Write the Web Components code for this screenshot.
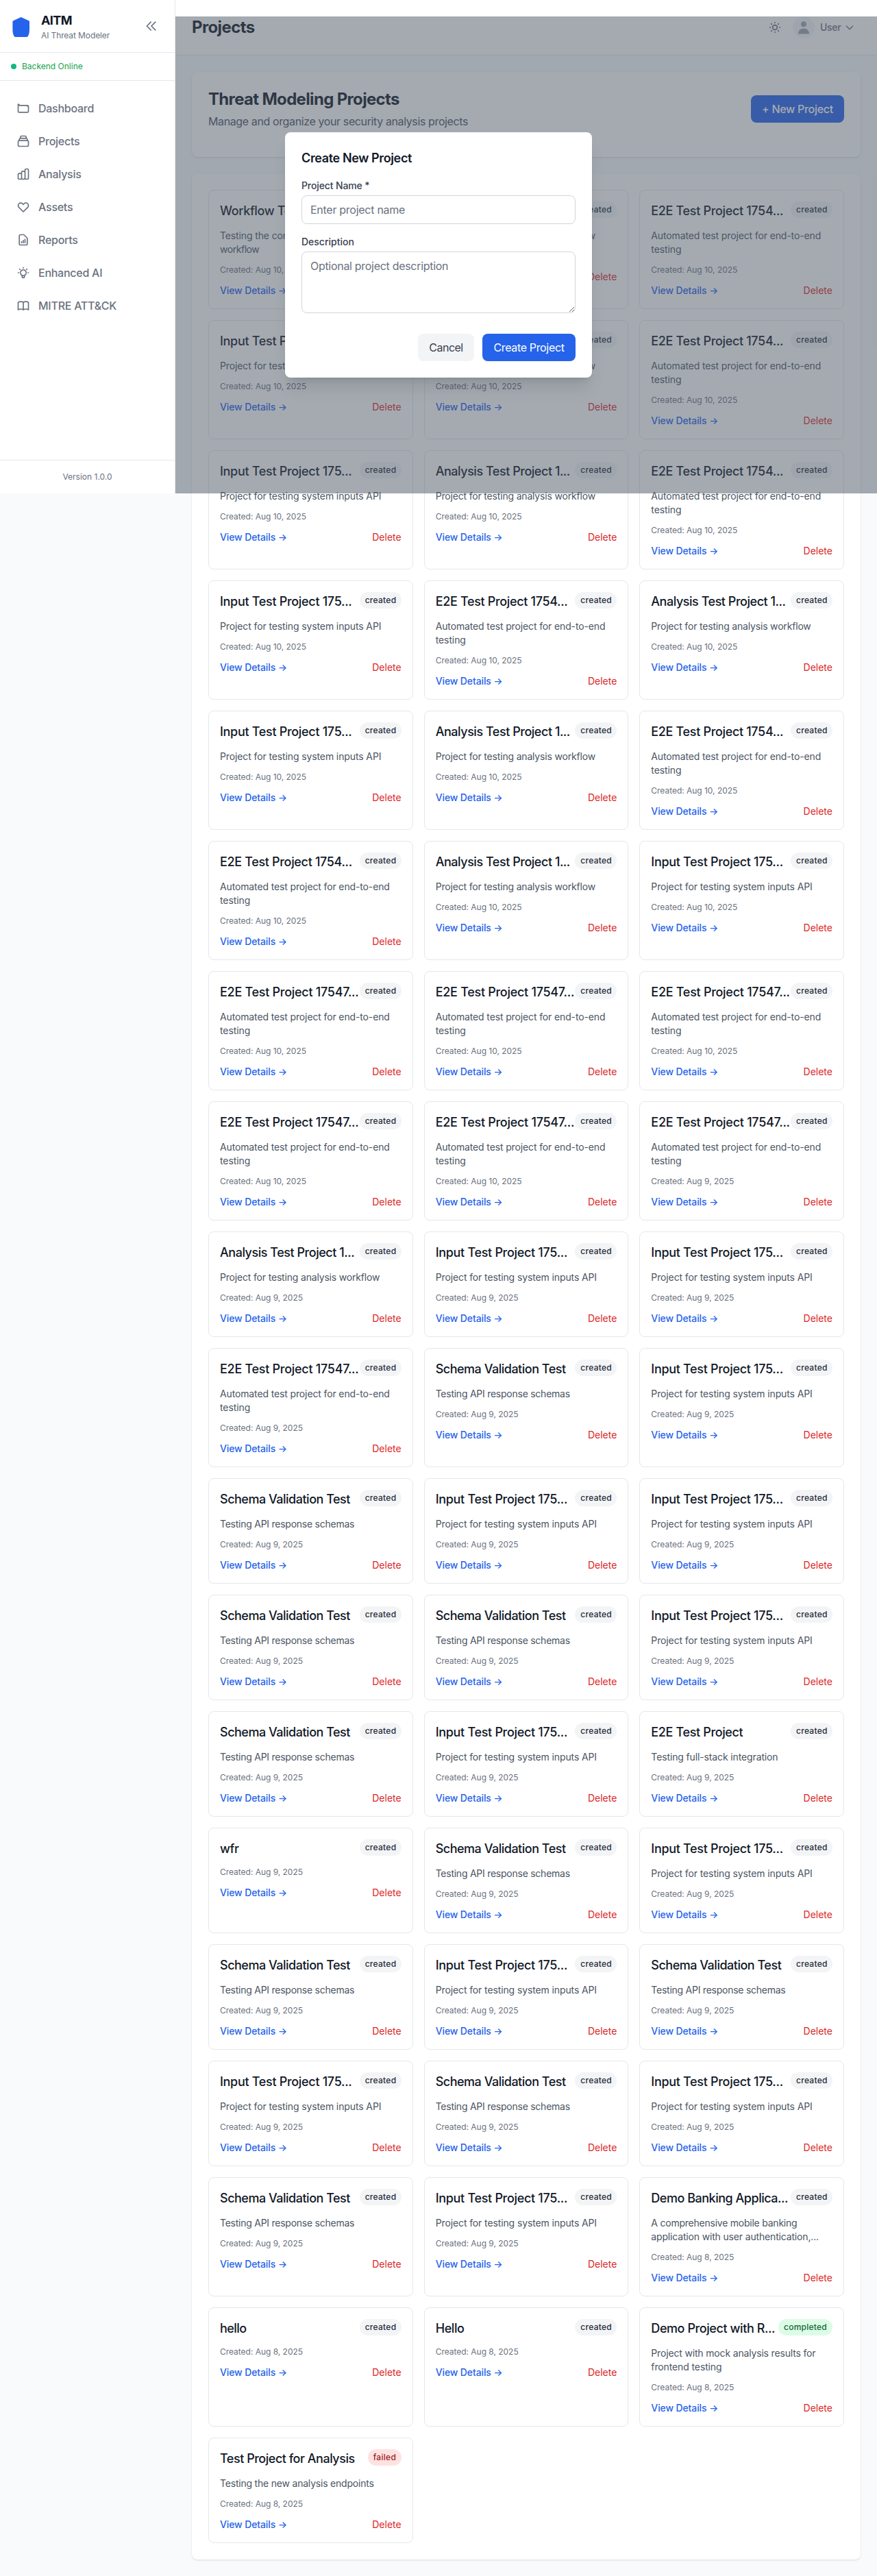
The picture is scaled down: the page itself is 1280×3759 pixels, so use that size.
<!DOCTYPE html>
<html lang="en">
<head>
<meta charset="utf-8">
<title>AITM - Projects</title>
<style>
body{margin:0;background:#f8fafc;font-family:Inter,"Liberation Sans",sans-serif;font-size:16px;line-height:24px;color:#111827}
</style>
</head>
<body>
<aitm-app></aitm-app>
<script>
const ICONS = {
  dashboard: 'M3 7v10a2 2 0 002 2h14a2 2 0 002-2V9a2 2 0 00-2-2H5a2 2 0 00-2-2zM18.3 7.6l1.9.9',
  projects: 'M19 11H5m14 0a2 2 0 012 2v6a2 2 0 01-2 2H5a2 2 0 01-2-2v-6a2 2 0 012-2m14 0V9a2 2 0 00-2-2M5 11V9a2 2 0 012-2m0 0V5a2 2 0 012-2h6a2 2 0 012 2v2M7 7h10',
  analysis: 'M9 19v-6a2 2 0 00-2-2H5a2 2 0 00-2 2v6a2 2 0 002 2h2a2 2 0 002-2zm0 0V9a2 2 0 012-2h2a2 2 0 012 2v10m-6 0a2 2 0 002 2h2a2 2 0 002-2m0 0V5a2 2 0 012-2h2a2 2 0 012 2v14a2 2 0 01-2 2h-2a2 2 0 01-2-2z',
  assets: 'M4.318 6.318a4.5 4.5 0 000 6.364L12 20.364l7.682-7.682a4.5 4.5 0 00-6.364-6.364L12 7.636l-1.318-1.318a4.5 4.5 0 00-6.364 0z',
  reports: 'M9 17v-2m3 2v-4m3 4v-6m2 10H7a2 2 0 01-2-2V5a2 2 0 012-2h5.586a1 1 0 01.707.293l5.414 5.414a1 1 0 01.293.707V19a2 2 0 01-2 2z',
  bulb: 'M9.663 17h4.673M12 3v1m6.364 1.636l-.707.707M21 12h-1M4 12H3m3.343-5.657l-.707-.707m2.828 9.9a5 5 0 117.072 0l-.548.547A3.374 3.374 0 0014 18.469V19a2 2 0 11-4 0v-.531c0-.895-.356-1.754-.988-2.386l-.548-.547z',
  book: 'M12 6.253v13m0-13C10.832 5.477 9.246 5 7.5 5S4.168 5.477 3 6.253v13C4.168 18.477 5.754 18 7.5 18s3.332.477 4.5 1.253m0-13C13.168 5.477 14.754 5 16.5 5c1.747 0 3.332.477 4.5 1.253v13C19.832 18.477 18.247 18 16.5 18c-1.746 0-3.332.477-4.5 1.253',
  collapse: 'M11 19l-7-7 7-7m8 14l-7-7 7-7',
  sun: 'M12 3v1m0 16v1m9-9h-1M4 12H3m15.364 6.364l-.707-.707M6.343 6.343l-.707-.707m12.728 0l-.707.707M6.343 17.657l-.707.707M16 12a4 4 0 11-8 0 4 4 0 018 0z',
  down: 'M19 9l-7 7-7-7'
};
const icon = (name, size = 20) => `<svg width="${size}" height="${size}" viewBox="0 0 24 24" fill="none" stroke="currentColor" stroke-width="2" stroke-linecap="round" stroke-linejoin="round"><path d="${ICONS[name]}"/></svg>`;

const pen = document.createElement('canvas').getContext('2d');

/* Shared base: fills the shadow root and tracks [data-w] texts to a given ink width. */
class Base extends HTMLElement {
  connectedCallback() {
    if (this.shadowRoot) return;
    const root = this.attachShadow({ mode: 'open' });
    root.innerHTML = `<style>*{box-sizing:border-box}h1,h2,h3,p{margin:0}svg{display:block;flex:none}button{font:inherit;letter-spacing:inherit;border:0;padding:0;margin:0;background:none;color:inherit}${this.styles()}</style>${this.markup()}`;
    root.querySelectorAll('[data-w]').forEach(el => {
      const cs = getComputedStyle(el), text = el.textContent;
      pen.font = `${cs.fontWeight} ${cs.fontSize} Inter`;
      const m = pen.measureText(text);
      const ink = m.actualBoundingBoxLeft + m.actualBoundingBoxRight;
      el.style.letterSpacing = ((el.dataset.w - ink) / (text.length - 1)).toFixed(3) + 'px';
    });
  }
}

customElements.define('nav-item', class extends Base {
  styles() { return `:host{display:flex;align-items:center;height:48px;padding-left:24px;gap:12px;color:#6b7280;font-weight:500;letter-spacing:-.26px}`; }
  markup() { return `${icon(this.getAttribute('icon'))}<slot></slot>`; }
});

customElements.define('app-sidebar', class extends Base {
  styles() { return `
    :host{display:flex;flex-direction:column;width:256px;height:720px;background:#fff;border-right:1px solid #e5e7eb;box-sizing:border-box;flex:none}
    .brand{display:flex;align-items:center;padding:16px;gap:12px;border-bottom:1px solid #e5e7eb}
    .brand .t{flex:1}
    h1{font-size:18px;line-height:28px;font-weight:700}
    .sub{font-size:12px;line-height:16px;color:#6b7280}
    .toggle{padding:8px;color:#6b7280}
    .status{display:flex;align-items:center;gap:8px;padding:12px 16px;border-bottom:1px solid #e5e7eb;font-size:12px;line-height:16px;color:#16a34a}
    .dot{width:8px;height:8px;border-radius:50%;background:#10b981}
    nav{flex:1;padding-top:16px}
    .foot{border-top:1px solid #e5e7eb;padding:16px;font-size:12px;line-height:16px;height:49px;color:#6b7280;text-align:center}`; }
  markup() { return `
    <div class="brand"><svg width="32" height="32" viewBox="0 0 32 32"><path fill="#2563eb" d="M14.7 3L25.6 7.9Q27 8.4 27 9.8V21C27 26 26 30 23.6 32H5.8C3.4 30 2.4 26 2.4 21V9.8Q2.4 8.4 3.8 7.9Z"/></svg>
      <div class="t"><h1><span data-w="44.7">AITM</span></h1><div class="sub"><span data-w="100.7">AI Threat Modeler</span></div></div>
      <button class="toggle">${icon('collapse')}</button></div>
    <div class="status"><span class="dot"></span><span>Backend Online</span></div>
    <nav>
      <nav-item icon="dashboard">Dashboard</nav-item>
      <nav-item icon="projects">Projects</nav-item>
      <nav-item icon="analysis">Analysis</nav-item>
      <nav-item icon="assets">Assets</nav-item>
      <nav-item icon="reports">Reports</nav-item>
      <nav-item icon="bulb">Enhanced AI</nav-item>
      <nav-item icon="book">MITRE ATT&amp;CK</nav-item>
    </nav>
    <div class="foot">Version 1.0.0</div>`; }
});

customElements.define('top-bar', class extends Base {
  styles() { return `
    :host{display:flex;align-items:center;justify-content:space-between;box-sizing:border-box;height:81px;padding:0 32px 0 24px;background:#fff;border-bottom:1px solid #e5e7eb}
    h1{font-size:24px;line-height:32px;font-weight:700}
    .right{display:flex;align-items:center;color:#6b7280}
    .avatar{width:32px;height:32px;border-radius:50%;background:#f3f4f6;margin:0 8px 0 16px;display:flex;align-items:center;justify-content:center;color:#9ca3af}
    .name{width:35px;font-size:14px;line-height:20px;font-weight:500}`; }
  markup() { return `<h1><span data-w="90.7">Projects</span></h1>
    <div class="right">${icon('sun')}
      <span class="avatar"><svg width="20" height="20" viewBox="0 0 20 20" fill="currentColor"><circle cx="10" cy="5.2" r="4"/><path d="M1.9 19.6C1.9 14.2 5.5 11.4 10 11.4S18.1 14.2 18.1 19.6Z"/></svg></span>
      <span class="name"><span data-w="30.3">User</span></span>${icon('down', 16)}</div>`; }
});

customElements.define('page-intro', class extends Base {
  styles() { return `
    :host{display:flex;justify-content:space-between;align-items:center;box-sizing:border-box;height:124px;padding:24px 24px 40px;background:#fff;border-radius:8px;box-shadow:0 1px 3px rgba(0,0,0,.1),0 1px 2px -1px rgba(0,0,0,.1)}
    h2{font-size:24px;line-height:32px;font-weight:700}
    p{margin-top:4px;color:#4b5563}
    button{width:136px;height:40px;border-radius:8px;background:#2563eb;color:#fff;font-weight:500}`; }
  markup() { return `<div><h2><span data-w="279">Threat Modeling Projects</span></h2><p><span data-w="378">Manage and organize your security analysis projects</span></p></div>
    <button><span data-w="103.7">+ New Project</span></button>`; }
});

customElements.define('project-card', class extends Base {
  styles() { return `
    :host{display:block;border:1px solid #e5e7eb;border-radius:8px;padding:16px;box-sizing:border-box;min-width:0}
    .top{display:flex;justify-content:space-between;align-items:flex-start;margin-bottom:12px}
    h3{font-size:18px;line-height:28px;font-weight:500;white-space:nowrap;width:0;flex:1;letter-spacing:-.36px}
    .badge{flex:none;padding:4px 8px;border-radius:12px;font-size:12px;line-height:16px;font-weight:500;text-align:center;width:61px;background:#f3f4f6;color:#1f2937}
    .completed{background:#dcfce7;color:#166534;width:79px}
    .failed{background:#fee2e2;color:#991b1b;width:49px}
    .desc{font-size:14px;line-height:20px;color:#4b5563;margin-bottom:12px;letter-spacing:-.13px;white-space:nowrap}
    .desc span{display:block}
    .date{font-size:12px;line-height:16px;color:#6b7280;margin-bottom:12px;letter-spacing:-.026px}
    .row{display:flex;justify-content:space-between;font-size:14px;line-height:20px}
    .view{color:#2563eb;font-weight:500}.del{color:#dc2626}`; }
  markup() {
    const { title, tw, lines, date, status } = this.data;
    const w = n => n ? ` data-w="${n}"` : '';
    const bw = { created: 45, completed: 62.3, failed: 32.8 }[status];
    return `<div class="top"><h3><span${w(tw)}>${title}</span></h3><span class="badge ${status}"><span data-w="${bw}">${status}</span></span></div>
      ${lines.length ? `<p class="desc">${lines.map(([t, n]) => `<span${w(n)}>${t}</span>`).join('')}</p>` : ''}
      <div class="date">Created: Aug ${date}, 2025</div>
      <div class="row"><span class="view"><span data-w="96.7">View Details →</span></span><span class="del">Delete</span></div>`;
  }
});

const KINDS = {
  I: ['Input Test Project 175...', 191.3, [['Project for testing system inputs API', 233.7]]],
  A: ['Analysis Test Project 1...', 196.2, [['Project for testing analysis workflow', 232]]],
  E: ['E2E Test Project 1754...', 191.7, [['Automated test project for end-to-end', 247.3], ['testing', 43.7]]],
  F: ['E2E Test Project 17547...', 201.3, [['Automated test project for end-to-end', 247.3], ['testing', 43.7]]],
  S: ['Schema Validation Test', 190.3, [['Testing API response schemas', 196]]],
  W: ['Workflow Test Project...', 0, [['Testing the complete analysis', 0], ['workflow', 57.3]]],
  P: ['E2E Test Project', 0, [['Testing full-stack integration', 0]]],
  w: ['wfr', 0, []],
  h: ['hello', 38.3, []],
  H: ['Hello', 41.4, []],
  B: ['Demo Banking Applica...', 198.7, [['A comprehensive mobile banking', 212.7], ['application with user authentication,...', 243.7]]],
  R: ['Demo Project with R...', 179.7, [['Project with mock analysis results for', 239], ['frontend testing', 102.7]]],
  T: ['Test Project for Analysis', 196.5, [['Testing the new analysis endpoints', 224.5]]]
};
const ORDER = 'WAE IAE IAE IEA IAE EAI FFF FFF AII FSI SII SSI SIP wSI SIS ISI SIB hHR T'.replace(/ /g, '');

customElements.define('project-grid', class extends Base {
  styles() { return `
    :host{display:grid;grid-template-columns:repeat(3,minmax(0,1fr));gap:16px;padding:24px;background:#fff;border-radius:8px;box-shadow:0 1px 3px rgba(0,0,0,.1),0 1px 2px -1px rgba(0,0,0,.1)}`; }
  markup() { return ''; }
  connectedCallback() {
    super.connectedCallback();
    [...ORDER].forEach((k, i) => {
      const [title, tw, lines] = KINDS[k];
      const card = document.createElement('project-card');
      card.data = { title, tw, lines, date: i < 23 ? 10 : i < 50 ? 9 : 8, status: k === 'R' ? 'completed' : k === 'T' ? 'failed' : 'created' };
      this.shadowRoot.append(card);
    });
  }
});

customElements.define('create-dialog', class extends Base {
  styles() { return `
    :host{display:flex;align-items:center;justify-content:center;position:absolute;left:256px;right:0;top:24px;height:696px;padding-right:256px;box-sizing:border-box;background:rgba(75,85,99,.5)}
    .box{width:448px;height:358px;padding:24px;background:#fff;border-radius:8px;box-shadow:0 20px 25px -5px rgba(0,0,0,.1),0 8px 10px -6px rgba(0,0,0,.1)}
    h3{font-size:18px;line-height:28px;font-weight:600;margin-bottom:16px}
    label{display:block;font-size:14px;line-height:20px;font-weight:500;color:#374151;margin-bottom:4px}
    input,textarea{display:block;width:100%;margin:0;border:1px solid #d1d5db;border-radius:8px;padding:8px 12px;font:inherit;background:#fff;outline:0}
    input{height:42px;margin-bottom:16px;letter-spacing:-.275px}
    textarea{height:90px;letter-spacing:-.3px;resize:vertical}
    ::placeholder{color:#6b7280;opacity:1}
    .actions{display:flex;justify-content:flex-end;gap:12px;margin-top:30px}
    .actions button{height:40px;border-radius:8px;background:#f3f4f6;color:#374151;width:82px}
    .actions .go{background:#2563eb;color:#fff;width:136px}`; }
  markup() { return `<div class="box"><h3><span data-w="162">Create New Project</span></h3>
    <label><span data-w="98.3">Project Name *</span></label><input placeholder="Enter project name">
    <label>Description</label><textarea placeholder="Optional project description"></textarea>
    <div class="actions"><button><span data-w="49">Cancel</span></button><button class="go"><span data-w="103.3">Create Project</span></button></div></div>`; }
});

customElements.define('aitm-app', class extends Base {
  styles() { return `
    :host{display:flex;align-items:flex-start;position:relative;width:1280px;height:3759px;overflow:hidden}
    .main{flex:1;min-width:0}
    .content{display:flex;flex-direction:column;gap:24px;padding:24px}`; }
  markup() { return `<app-sidebar></app-sidebar><div class="main"><top-bar></top-bar><div class="content"><page-intro></page-intro><project-grid></project-grid></div></div><create-dialog></create-dialog>`; }
});
</script>
</body>
</html>
